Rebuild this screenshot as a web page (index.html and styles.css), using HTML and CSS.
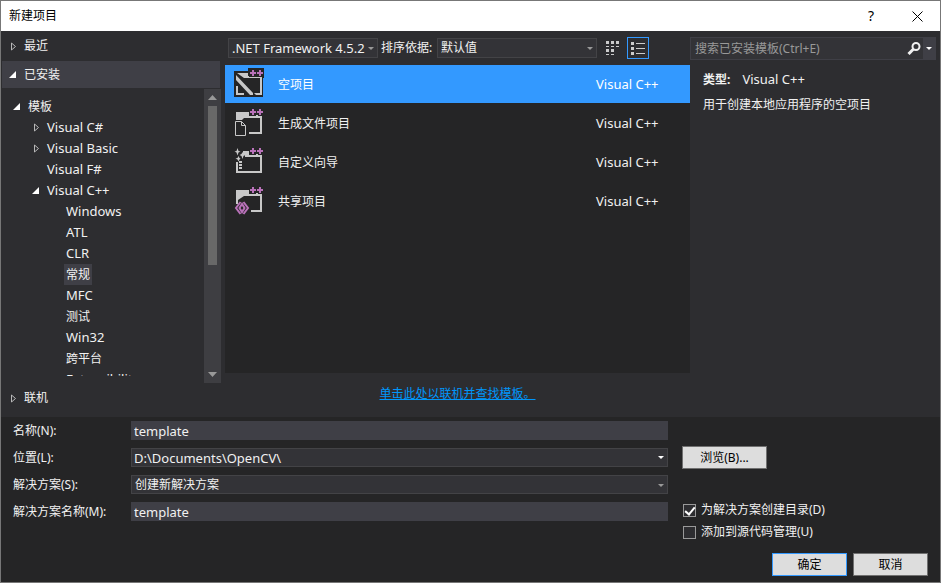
FILE: index.html
```html
<!DOCTYPE html>
<html lang="zh-CN">
<head>
  <meta charset="UTF-8" />
  <meta name="viewport" content="width=device-width, initial-scale=1.0" />
  <title>新建项目</title>
  <link rel="stylesheet" href="styles.css">
</head>
<body>
  <div class="dialog">
    <header class="title-bar">
      <h1>新建项目</h1>
      <button class="title-button help" aria-label="帮助">?</button>
      <button class="title-button" aria-label="关闭">
        <svg width="11" height="11" viewBox="0 0 11 11"><path d="M.5 .5l10 10M10.500 .5l-10 10" stroke="#000" fill="none"/></svg>
      </button>
    </header>

    <main class="content">
      <!-- Template categories -->
      <nav class="sidebar">
        <button class="section">
          <svg class="arrow" width="8" height="9" viewBox="0 0 8 9"><path d="M2.500 1v7L6.500 4.500z" fill="none" stroke="#b8b8b8"/></svg>
          最近
        </button>
        <button class="section open">
          <svg class="arrow" width="8" height="8" viewBox="0 0 8 8"><path d="M7 0v7H0z" fill="#fff"/></svg>
          已安装
        </button>
        <div class="tree-box">
          <ul class="tree">
            <li>
              <button class="node"><svg class="arrow" width="8" height="8" viewBox="0 0 8 8"><path d="M8 0v7H1z" fill="#fff"/></svg><span class="cjk">模板</span></button>
              <ul>
                <li><button class="node"><svg class="arrow" width="8" height="9" viewBox="0 0 8 9"><path d="M3.500 1v7L7.500 4.500z" fill="none" stroke="#b8b8b8"/></svg><span>Visual C#</span></button></li>
                <li><button class="node"><svg class="arrow" width="8" height="9" viewBox="0 0 8 9"><path d="M3.500 1v7L7.500 4.500z" fill="none" stroke="#b8b8b8"/></svg><span>Visual Basic</span></button></li>
                <li><button class="node leaf"><span>Visual F#</span></button></li>
                <li>
                  <button class="node"><svg class="arrow" width="8" height="8" viewBox="0 0 8 8"><path d="M8 0v7H1z" fill="#fff"/></svg><span>Visual C++</span></button>
                  <ul>
                    <li><button class="node leaf"><span>Windows</span></button></li>
                    <li><button class="node leaf"><span>ATL</span></button></li>
                    <li><button class="node leaf"><span>CLR</span></button></li>
                    <li><button class="node leaf selected"><span class="cjk">常规</span></button></li>
                    <li><button class="node leaf"><span>MFC</span></button></li>
                    <li><button class="node leaf"><span class="cjk">测试</span></button></li>
                    <li><button class="node leaf"><span>Win32</span></button></li>
                    <li><button class="node leaf"><span class="cjk">跨平台</span></button></li>
                    <li><button class="node leaf"><span>Extensibility</span></button></li>
                  </ul>
                </li>
              </ul>
            </li>
          </ul>
          <div class="scrollbar">
            <svg width="9" height="5" viewBox="0 0 9 5"><path d="M0 5L4.500 0 9 5z" fill="#999"/></svg>
            <div class="track"><div class="thumb"></div></div>
            <svg width="9" height="5" viewBox="0 0 9 5"><path d="M0 0h9L4.500 5z" fill="#999"/></svg>
          </div>
        </div>
        <button class="section">
          <svg class="arrow" width="8" height="9" viewBox="0 0 8 9"><path d="M2.500 1v7L6.500 4.500z" fill="none" stroke="#b8b8b8"/></svg>
          联机
        </button>
      </nav>

      <!-- Template list -->
      <section class="templates">
        <div class="toolbar">
          <div class="select framework">
            <select class="latin" aria-label=".NET Framework"><option>.NET Framework 4.5.2</option></select>
          </div>
          <label for="sort">排序依据:</label>
          <div class="select sort">
            <select id="sort"><option>默认值</option></select>
          </div>
          <button class="view-button" aria-label="小图标">
            <svg width="14" height="14" viewBox="0 0 14 14" fill="#ccc"><path d="M0 0h3v3H0zM5 0h3v3H5zM10 0h3v3h-3zM0 5h3v1H0zM5 5h3v1H5zM10 5h3v1h-3zM0 8h3v3H0zM5 8h3v3H5zM0 13h3v1H0zM5 13h3v1H5z"/></svg>
          </button>
          <button class="view-button active" aria-label="列表">
            <svg width="14" height="13" viewBox="0 0 14 13" fill="#ccc"><path d="M0 0h3v3H0zM0 5h3v3H0zM0 10h3v3H0zM5 1h9v1H5zM5 6h9v1H5zM5 11h9v1H5z"/></svg>
          </button>
        </div>
        <ul class="template-list">
          <li class="template current">
            <svg width="30" height="30" viewBox="0 0 30 30">
              <path d="M0 3h14V0h16v10h-1v19H0z" fill="#252526"/>
              <path d="M3 5h11v3h14v19h-6l-2-2h6V10H10z" fill="#c8c8c8"/>
              <path d="M2 7l17 18v2h-3L2 12zM2 18h2v7h6v2H2z" fill="#c8c8c8"/>
              <path d="M15 1h15v8H15z" fill="#252526"/>
              <path d="M18 2h2v2h2v2h-2v2h-2V6h-2V4h2zM25 2h2v2h2v2h-2v2h-2V6h-2V4h2z" fill="#b972b9"/>
            </svg>
            <span class="name">空项目</span><span class="language">Visual C++</span>
          </li>
          <li class="template">
            <svg width="30" height="30" viewBox="0 0 30 30">
              <path d="M2 5h13v4h13v18H15v-2h11V11H10L8 13H2z" fill="#c8c8c8"/>
              <path d="M15 1h15v8H15z" fill="#252526"/>
              <path d="M22 8h2v1h-2z" fill="#c8c8c8"/>
              <path d="M1.500 14.500h6l4 4v10h-10zM7.500 14.500v4h4" fill="#252526" stroke="#c8c8c8"/>
              <path d="M18 2h2v2h2v2h-2v2h-2V6h-2V4h2zM25 2h2v2h2v2h-2v2h-2V6h-2V4h2z" fill="#b972b9"/>
            </svg>
            <span class="name">生成文件项目</span><span class="language">Visual C++</span>
          </li>
          <li class="template">
            <svg width="30" height="30" viewBox="0 0 30 30">
              <path d="M9 5h6v4h13v18H2V16h2v9h22V11H11V9H9z" fill="#c8c8c8"/>
              <path d="M15 1h15v8H15z" fill="#252526"/>
              <path d="M22 8h2v1h-2zM5 15h3v2H5zM5 18h3v2H5zM5 21h3v2H5z" fill="#c8c8c8"/>
              <path d="M3.500 2l1 3 2 .5-2 1-1 3-1-3-2-1 2-.5zM8.500 6l1 2 2 1-2 1-1 3-1-3-2-1 2-1zM4.500 10l1 2 1 .5-1 1-1 2-1-2-2-1 2-.5z" fill="#c8c8c8"/>
              <path d="M18 2h2v2h2v2h-2v2h-2V6h-2V4h2zM25 2h2v2h2v2h-2v2h-2V6h-2V4h2z" fill="#b972b9"/>
            </svg>
            <span class="name">自定义向导</span><span class="language">Visual C++</span>
          </li>
          <li class="template">
            <svg width="30" height="30" viewBox="0 0 30 30">
              <path d="M2 5h13v4h13v18H17v-2h9V11H10L4 15v4H2z" fill="#c8c8c8"/>
              <path d="M15 1h15v8H15z" fill="#252526"/>
              <path d="M22 8h2v1h-2z" fill="#c8c8c8"/>
              <path d="M6.500 17L2 23l4.500 6M9.500 17l4.500 6-4.500 6M8 19l-2.500 4L8 27l2.500-4z" fill="none" stroke="#b972b9" stroke-width="2"/>
              <path d="M18 2h2v2h2v2h-2v2h-2V6h-2V4h2zM25 2h2v2h2v2h-2v2h-2V6h-2V4h2z" fill="#b972b9"/>
            </svg>
            <span class="name">共享项目</span><span class="language">Visual C++</span>
          </li>
        </ul>
        <p class="online"><a href="#">单击此处以联机并查找模板。</a></p>
      </section>

      <!-- Search and description -->
      <aside class="details">
        <div class="search">
          <input type="text" aria-label="搜索已安装模板" placeholder="搜索已安装模板(Ctrl+E)">
          <button class="search-button" aria-label="搜索">
            <svg width="14" height="13" viewBox="0 0 14 13" fill="none" stroke="#f1f1f1"><circle cx="9" cy="4.500" r="3.500" stroke-width="2"/><path d="M6.500 7L1.500 12" stroke-width="3"/></svg>
          </button>
          <button class="search-menu" aria-label="搜索选项">
            <svg width="6" height="3" viewBox="0 0 6 3"><path d="M0 0h6L3 3z" fill="#fff"/></svg>
          </button>
        </div>
        <p class="type"><b>类型:</b><span class="latin">Visual C++</span></p>
        <p>用于创建本地应用程序的空项目</p>
      </aside>
    </main>

    <form class="project-form">
      <div class="fields">
        <label for="name">名称(N):</label>
        <input class="text-box" id="name" type="text" value="template">

        <label for="location">位置(L):</label>
        <div class="combo">
          <input id="location" type="text" value="D:\Documents\OpenCV\">
          <button type="button" aria-label="位置列表"><svg width="6" height="3" viewBox="0 0 6 3"><path d="M0 0h6L3 3z" fill="#fff"/></svg></button>
        </div>
        <button class="push-button browse" type="button">浏览(B)...</button>

        <label for="solution">解决方案(S):</label>
        <div class="select">
          <select id="solution"><option>创建新解决方案</option></select>
        </div>

        <label for="solution-name">解决方案名称(M):</label>
        <input class="text-box" id="solution-name" type="text" value="template">
        <div class="options">
          <label><input type="checkbox" checked>为解决方案创建目录(D)</label>
          <label><input type="checkbox">添加到源代码管理(U)</label>
        </div>
      </div>
      <div class="buttons">
        <button class="push-button default" type="button">确定</button>
        <button class="push-button" type="button">取消</button>
      </div>
    </form>
  </div>
</body>
</html>
```
FILE: styles.css
```css
* {
  box-sizing: border-box;
}
body {
  margin: 0;
  font-family: "Noto Sans", "Noto Sans CJK SC", sans-serif;
  font-size: 12px;
  line-height: 18px;
  color: #f1f1f1;
  background-color: #252526;
}
button, input, select {
  font: inherit;
  color: inherit;
  margin: 0;
  padding: 0;
  border: none;
  border-radius: 0;
  background: none;
}
ul, p, h1 {
  margin: 0;
  padding: 0;
  list-style: none;
}
svg {
  display: block;
  flex: none;
}
.latin {
  font-size: 13px;
}
.dialog {
  display: flex;
  flex-direction: column;
  height: 100vh;
  border: 1px solid #777;
}

/* Title bar */
.title-bar {
  display: flex;
  height: 30px;
  align-items: center;
  padding-left: 8px;
  background-color: #fff;
  color: #000;
}
.title-bar h1 {
  flex: 1;
  font-size: 12px;
  font-weight: normal;
}
.title-button {
  display: flex;
  width: 46px;
  height: 30px;
  align-items: center;
  justify-content: center;
}
.help {
  font-size: 14px;
}

.content {
  display: grid;
  grid-template-columns: 220px 1fr 250px;
  flex: 1;
  min-height: 0;
  background-color: #2d2d30;
}

/* Categories */
.sidebar {
  display: flex;
  flex-direction: column;
  min-height: 0;
  padding: 0 0 4px 1px;
}
.section {
  display: flex;
  align-items: center;
  gap: 7px;
  flex: none;
  height: 30px;
  padding-left: 7px;
  text-align: left;
}
.section.open {
  height: 27px;
  margin-right: 1px;
  background-color: #3f3f46;
}
.tree-box {
  display: flex;
  flex: 1;
  min-height: 0;
  padding-top: 1px;
}
.tree {
  flex: 1;
  margin: 7px 0;
  padding-left: 10px;
  overflow: hidden;
}
.tree ul {
  padding-left: 19px;
}
.node {
  display: flex;
  align-items: center;
  height: 21px;
  font-size: 13px;
}
.node .arrow {
  margin-right: 6px;
}
.node span {
  padding: 0 2px;
  line-height: 21px;
}
.node .cjk {
  font-size: 12px;
}
.leaf {
  padding-left: 14px;
}
.selected span {
  background-color: #3f3f46;
}
.scrollbar {
  display: flex;
  flex-direction: column;
  align-items: center;
  width: 17px;
  padding: 6px 0;
  background-color: #3e3e42;
}
.track {
  flex: 1;
  width: 9px;
  padding: 6px 0;
}
.thumb {
  height: 61%;
  background-color: #686868;
}

/* Template list */
.templates {
  display: flex;
  flex-direction: column;
  min-width: 0;
  padding-left: 4px;
}
.toolbar {
  display: flex;
  align-items: center;
  gap: 3px;
  height: 34px;
  padding-left: 3px;
}
.select {
  position: relative;
  height: 20px;
  border: 1px solid #434346;
  background-color: #333337;
}
.select select {
  display: block;
  width: 100%;
  height: 18px;
  padding-left: 3px;
  appearance: none;
  outline: none;
}
.select::after {
  content: "";
  position: absolute;
  top: 8px;
  right: 3px;
  border: 3px solid transparent;
  border-top-color: #999;
  border-bottom: none;
  pointer-events: none;
}
.framework {
  width: 150px;
}
.sort {
  width: 160px;
}
.toolbar label {
  width: 53px;
  white-space: nowrap;
}
.view-button {
  display: flex;
  align-items: center;
  justify-content: center;
  width: 22px;
  height: 22px;
  margin-left: 2px;
}
.view-button.active {
  margin-left: 0;
  border: 1px solid #3399ff;
}
.template-list {
  display: flex;
  flex-direction: column;
  gap: 1px;
  flex: 1;
  background-color: #252526;
}
.template {
  display: flex;
  align-items: center;
  height: 38px;
  padding-left: 9px;
}
.template svg {
  margin-bottom: 2px;
}
.template.current {
  background-color: #3399ff;
  color: #fff;
}
.name {
  flex: 1;
  padding: 2px 0 0 14px;
}
.language {
  width: 94px;
  font-size: 13px;
}
.online {
  height: 44px;
  padding-top: 12px;
  text-align: center;
}
.online a {
  color: #0097fb;
}

/* Search and description */
.details p {
  padding-left: 13px;
  line-height: 25px;
}
.search {
  display: flex;
  height: 23px;
  margin: 6px 4px 7px 0;
  border: 1px solid #3f3f46;
  background-color: #333337;
}
.search input {
  flex: 1;
  min-width: 0;
  padding-left: 4px;
}
.search input::placeholder {
  color: #999;
}
.search-button, .search-menu {
  display: flex;
  align-items: center;
  justify-content: center;
  width: 18px;
}
.search-menu {
  width: 12px;
  background-color: #3f3f46;
}
.type {
  display: flex;
  gap: 12px;
}

/* Project settings */
.fields {
  display: grid;
  grid-template-columns: 118px 1fr 272px;
  grid-template-rows: repeat(4, 27px) 22px;
  align-items: center;
  padding-left: 12px;
}
.fields > label {
  grid-column: 1;
}
.text-box, .combo {
  height: 19px;
  padding-left: 3px;
  background-color: #3f3f46;
  font-size: 13px;
}
.combo {
  display: flex;
  padding-left: 2px;
  border: 1px solid #434346;
  background-color: #333337;
}
.combo input {
  flex: 1;
  min-width: 0;
}
.combo button {
  display: flex;
  align-items: center;
  padding: 0 3px;
}
.fields .select {
  height: 19px;
}
.push-button {
  width: 75px;
  height: 23px;
  border: 1px solid #707070;
  background-color: #ddd;
  color: #000;
}
.push-button.default {
  border-color: #3399ff;
}
.push-button.browse {
  width: 85px;
  margin-left: 14px;
}
.options {
  grid-column: 3;
  grid-row: 4 / span 2;
  align-self: start;
  padding: 1px 0 0 15px;
}
.options label {
  display: flex;
  align-items: center;
  gap: 5px;
  height: 22px;
}
.options input {
  display: grid;
  place-items: center;
  width: 13px;
  height: 13px;
  border: 1px solid #999;
  background-color: #2d2d30;
  appearance: none;
}
.options input:checked::after {
  content: "";
  width: 4px;
  height: 8px;
  border: solid #fff;
  border-width: 0 2px 2px 0;
  transform: rotate(40deg);
}
.buttons {
  display: flex;
  justify-content: flex-end;
  gap: 6px;
  padding: 6px 12px;
}
```
